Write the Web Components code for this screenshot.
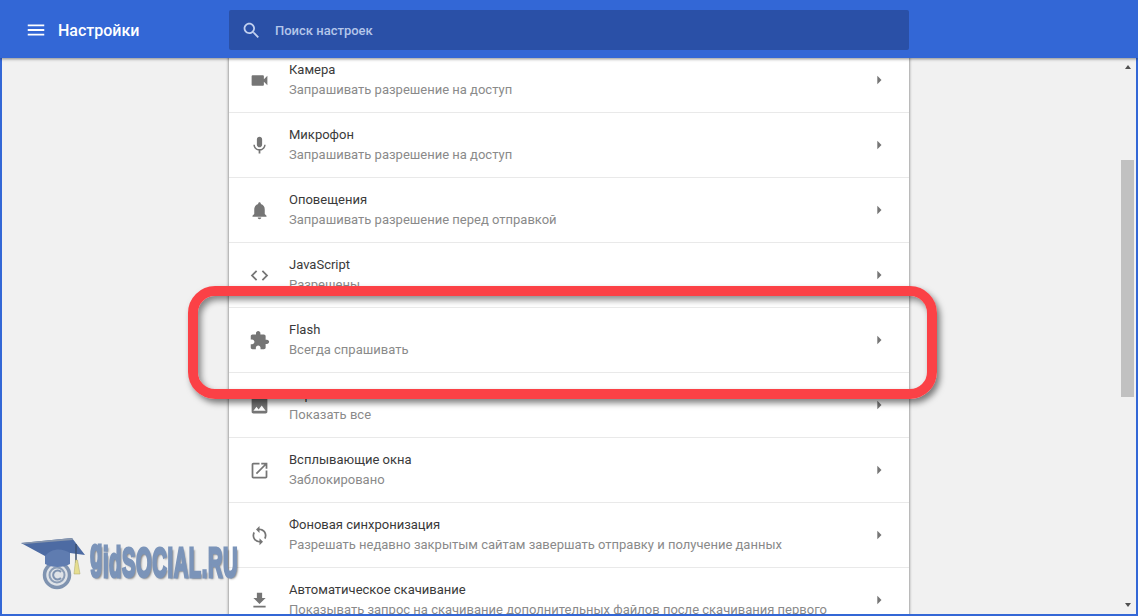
<!DOCTYPE html>
<html lang="ru">
<head>
<meta charset="utf-8">
<title>Настройки</title>
<style>
    html, body { margin: 0; height: 100%; overflow: hidden; }
    body { font-family: Roboto, "Liberation Sans", sans-serif; }
</style>
</head>
<body>
<settings-app>
    <settings-row icon="videocam">Камера<span slot="sub">Запрашивать разрешение на доступ</span></settings-row>
    <settings-row icon="mic">Микрофон<span slot="sub">Запрашивать разрешение на доступ</span></settings-row>
    <settings-row icon="bell">Оповещения<span slot="sub">Запрашивать разрешение перед отправкой</span></settings-row>
    <settings-row icon="code">JavaScript<span slot="sub">Разрешены</span></settings-row>
    <settings-row icon="extension">Flash<span slot="sub">Всегда спрашивать</span></settings-row>
    <settings-row icon="photo">Картинки<span slot="sub">Показать все</span></settings-row>
    <settings-row icon="open">Всплывающие окна<span slot="sub">Заблокировано</span></settings-row>
    <settings-row icon="sync">Фоновая синхронизация<span slot="sub">Разрешать недавно закрытым сайтам завершать отправку и получение данных</span></settings-row>
    <settings-row icon="download" last>Автоматическое скачивание<span slot="sub">Показывать запрос на скачивание дополнительных файлов после скачивания первого</span></settings-row>
</settings-app>

<script>
const ICONS = {
    menu: 'M3 18h18v-2H3v2zm0-5h18v-2H3v2zm0-7v2h18V6H3z',
    search: 'M15.5 14h-.79l-.28-.27C15.41 12.59 16 11.11 16 9.5 16 5.91 13.09 3 9.5 3S3 5.91 3 9.5 5.91 16 9.5 16c1.61 0 3.09-.59 4.23-1.57l.27.28v.79l5 4.99L20.49 19l-4.99-5zm-6 0C7.01 14 5 11.99 5 9.5S7.01 5 9.5 5 14 7.01 14 9.5 11.99 14 9.5 14z',
    videocam: 'M17 10.5V7c0-.55-.45-1-1-1H4c-.55 0-1 .45-1 1v10c0 .55.45 1 1 1h12c.55 0 1-.45 1-1v-3.5l4 4v-11l-4 4z',
    mic: 'M12 14c1.66 0 2.99-1.34 2.99-3L15 5c0-1.66-1.34-3-3-3S9 3.34 9 5v6c0 1.66 1.34 3 3 3zm5.3-3c0 3-2.54 5.1-5.3 5.1S6.7 14 6.7 11H5c0 3.41 2.72 6.23 6 6.72V21h2v-3.28c3.28-.48 6-3.3 6-6.72h-1.7z',
    bell: 'M12 22c1.1 0 2-.9 2-2h-4c0 1.1.9 2 2 2zm6-6v-5c0-3.07-1.63-5.64-4.5-6.32V4c0-.83-.67-1.5-1.5-1.5s-1.5.67-1.5 1.5v.68C7.64 5.36 6 7.92 6 11v5l-2 2v1h16v-1l-2-2z',
    code: 'M9.4 16.6L4.8 12l4.6-4.6L8 6l-6 6 6 6 1.4-1.4zm5.2 0l4.6-4.6-4.6-4.6L16 6l6 6-6 6-1.4-1.4z',
    extension: 'M20.5 11H19V7c0-1.1-.9-2-2-2h-4V3.5C13 2.12 11.88 1 10.5 1S8 2.12 8 3.5V5H4c-1.1 0-1.99.9-1.99 2v3.8H3.5c1.49 0 2.7 1.21 2.7 2.7s-1.21 2.7-2.7 2.7H2V20c0 1.1.9 2 2 2h3.8v-1.5c0-1.49 1.21-2.7 2.7-2.7 1.49 0 2.7 1.21 2.7 2.7V22H17c1.1 0 2-.9 2-2v-4h1.5c1.38 0 2.5-1.12 2.5-2.5S21.88 11 20.5 11z',
    photo: 'M21 19V5c0-1.1-.9-2-2-2H5c-1.1 0-2 .9-2 2v14c0 1.1.9 2 2 2h14c1.1 0 2-.9 2-2zM8.5 13.5l2.5 3.01L14.5 12l4.5 6H5l3.5-4.5z',
    open: 'M19 19H5V5h7V3H5c-1.11 0-2 .9-2 2v14c0 1.1.89 2 2 2h14c1.1 0 2-.9 2-2v-7h-2v7zM14 3v2h3.59l-9.83 9.83 1.41 1.41L19 6.41V10h2V3h-7z',
    sync: 'M12 4V1L8 5l4 4V6c3.31 0 6 2.69 6 6 0 1.01-.25 1.97-.7 2.8l1.46 1.46C19.54 15.03 20 13.57 20 12c0-4.42-3.58-8-8-8zm0 14c-3.31 0-6-2.69-6-6 0-1.01.25-1.97.7-2.8L5.24 7.74C4.46 8.97 4 10.43 4 12c0 4.42 3.58 8 8 8v3l4-4-4-4v3z',
    download: 'M19 9h-4V3H9v6H5l7 7 7-7zM5 18v2h14v-2H5z',
    arrow: 'M10 7l5 5-5 5z'
};

class SetIcon extends HTMLElement {
    connectedCallback() {
        const name = this.getAttribute('name');
        this.attachShadow({ mode: 'open' });
        this.shadowRoot.innerHTML = `
            <style>
                :host { display: block; width: var(--size, 24px); height: var(--size, 24px); flex: none; }
                svg { display: block; width: 100%; height: 100%; fill: currentColor; }
            </style>
            <svg viewBox="0 0 24 24"><path d="${ICONS[name]}"></path></svg>
        `;
    }
}
customElements.define('set-icon', SetIcon);

class SettingsRow extends HTMLElement {
    connectedCallback() {
        this.attachShadow({ mode: 'open' });
        this.shadowRoot.innerHTML = `
            <style>
                :host {
                    display: flex;
                    align-items: center;
                    height: 64px;
                    padding: 0 16px 0 18px;
                    border-bottom: 1px solid #e9e9e9;
                    color: #757575;
                    flex: none;
                }
                :host([last]) { border-bottom: 0; }
                .ico { --size: 21px; margin: 0 1.5px; }
                .text { flex: 1; margin-left: 18px; min-width: 0; }
                .label { font-size: 13px; line-height: 20px; color: #3a3a3a; }
                .sub { font-size: 13px; line-height: 20px; color: #8a8a8a; white-space: nowrap; }
                .go { --size: 20px; color: #757575; margin-right: 4px; }
            </style>
            <set-icon class="ico" name="${this.getAttribute('icon')}"></set-icon>
            <div class="text">
                <div class="label"><slot></slot></div>
                <div class="sub"><slot name="sub"></slot></div>
            </div>
            <set-icon class="go" name="arrow"></set-icon>
        `;
    }
}
customElements.define('settings-row', SettingsRow);

class SearchBox extends HTMLElement {
    connectedCallback() {
        this.attachShadow({ mode: 'open' });
        this.shadowRoot.innerHTML = `
            <style>
                :host {
                    display: flex;
                    align-items: center;
                    gap: 13.5px;
                    width: 680px;
                    height: 40px;
                    padding: 0 11.5px;
                    box-sizing: border-box;
                    border-radius: 2px;
                    background: #2a50a7;
                    font-size: 13px;
                    font-weight: 500;
                }
                set-icon { --size: 21px; color: #c2d1f0; }
                span { color: #b4c6ea; }
            </style>
            <set-icon name="search"></set-icon>
            <span>Поиск настроек</span>
        `;
    }
}
customElements.define('search-box', SearchBox);

class SettingsHeader extends HTMLElement {
    connectedCallback() {
        this.attachShadow({ mode: 'open' });
        this.shadowRoot.innerHTML = `
            <style>
                :host {
                    display: flex;
                    align-items: center;
                    height: 58px;
                    padding-top: 2px;
                    box-sizing: border-box;
                    flex: none;
                    background: #3367d6;
                    color: #fff;
                    box-shadow: 0 1px 3px rgba(0, 0, 0, .45);
                    position: relative;
                    z-index: 1;
                }
                .left { display: flex; align-items: center; width: 229px; padding-left: 25px; box-sizing: border-box; }
                set-icon { --size: 22px; }
                h1 { margin: 0 0 0 11px; font-size: 16px; font-weight: 500; }
            </style>
            <div class="left">
                <set-icon name="menu"></set-icon>
                <h1>Настройки</h1>
            </div>
            <search-box></search-box>
        `;
    }
}
customElements.define('settings-header', SettingsHeader);

class ScrollTrack extends HTMLElement {
    connectedCallback() {
        this.attachShadow({ mode: 'open' });
        this.shadowRoot.innerHTML = `
            <style>
                :host { display: flex; flex-direction: column; width: 13px; flex: none; margin-right: 2px; }
                .up, .down { width: 0; height: 0; margin: 0 auto; border: 3.5px solid transparent; }
                .up { margin-top: 7px; border-top: 0; border-bottom: 4px solid #505050; }
                .thumb { height: 237px; margin-top: 91px; background: #c1c1c1; }
                .down { margin-top: auto; margin-bottom: 7px; border-bottom: 0; border-top: 4px solid #505050; }
            </style>
            <div class="up"></div>
            <div class="thumb"></div>
            <div class="down"></div>
        `;
    }
}
customElements.define('scroll-track', ScrollTrack);

class SiteMark extends HTMLElement {
    connectedCallback() {
        this.attachShadow({ mode: 'open' });
        this.shadowRoot.innerHTML = `
            <style>
                :host {
                    position: absolute;
                    left: 20px;
                    top: 535px;
                    width: 225px;
                    height: 60px;
                    pointer-events: none;
                }
                svg { position: absolute; left: 0; top: 0; filter: blur(.4px); }
                .word {
                    position: absolute;
                    left: 70px;
                    top: 2px;
                    font: bold 43px/50px "Liberation Sans", sans-serif;
                    letter-spacing: 1.2px;
                    color: #7b94b9;
                    -webkit-text-stroke: 3px #7b94b9;
                    text-shadow: 3px 2px 3px rgba(40, 40, 40, .55);
                    transform: scaleX(.47);
                    transform-origin: 0 0;
                    white-space: nowrap;
                    filter: blur(.5px);
                }
                .g { display: inline-block; transform: translateY(-9px); }
                .caps { text-transform: uppercase; }
            </style>
            <svg width="70" height="60" viewBox="20 535 70 60">
                <circle cx="57" cy="575" r="12.5" fill="#dfe3e8" stroke="#7f93b0" stroke-width="3.5"></circle>
                <circle cx="57" cy="575" r="7.5" fill="none" stroke="#8b9db6" stroke-width="2"></circle>
                <path d="M61 572a4.5 4.5 0 1 0 0 6" fill="none" stroke="#7f93b0" stroke-width="2"></path>
                <path d="M45 548h25v16c-7 4-18 4-25 0z" fill="#5f7cb0"></path>
                <path d="M21 543L72 538L85 555L70 553C62 548 52 548 45 556z" fill="#4d6ba3"></path>
                <path d="M21 543L72 538L73 540L24 544z" fill="#8796ad"></path>
                <path d="M76 544v19" stroke="#3d4f6e" stroke-width="1.5" fill="none"></path>
                <path d="M75.5 560h2l2.500 14h-6z" fill="#e6de90" stroke="#a9a468" stroke-width=".5"></path>
            </svg>
            <span class="word"><span class="g">g</span>id<span class="caps">social.ru</span></span>
        `;
    }
}
customElements.define('site-mark', SiteMark);

class RedFrame extends HTMLElement {
    connectedCallback() {
        this.attachShadow({ mode: 'open' });
        this.shadowRoot.innerHTML = `
            <style>
                :host {
                    position: absolute;
                    left: 188px;
                    top: 286px;
                    width: 749px;
                    height: 113px;
                    box-sizing: border-box;
                    border: 10px solid #fb4146;
                    border-radius: 27px;
                    box-shadow: 3px 4px 6px rgba(0, 0, 0, .5), inset 3px 4px 6px rgba(0, 0, 0, .45);
                    pointer-events: none;
                }
            </style>
        `;
    }
}
customElements.define('red-frame', RedFrame);

class SettingsApp extends HTMLElement {
    connectedCallback() {
        this.attachShadow({ mode: 'open' });
        this.shadowRoot.innerHTML = `
            <style>
                :host {
                    display: flex;
                    flex-direction: column;
                    position: relative;
                    width: 1138px;
                    height: 616px;
                    box-sizing: border-box;
                    overflow: hidden;
                    background: #f1f1f1;
                    font-family: Roboto, "Liberation Sans", sans-serif;
                }
                .page {
                    flex: 1;
                    display: flex;
                    min-height: 0;
                    overflow: hidden;
                    border: solid #3367d6;
                    border-width: 0 2px 2px 2px;
                }
                .scroll { flex: 1; min-width: 0; overflow: hidden; padding-left: 227px; }
                .card {
                    width: 680px;
                    margin-top: -10px;
                    background: #fff;
                    box-shadow: 0 0 3px rgba(0, 0, 0, .6);
                    display: flex;
                    flex-direction: column;
                }
            </style>
            <settings-header></settings-header>
            <div class="page">
                <div class="scroll">
                    <div class="card"><slot></slot></div>
                </div>
                <scroll-track></scroll-track>
            </div>
            <red-frame></red-frame>
            <site-mark></site-mark>
        `;
    }
}
customElements.define('settings-app', SettingsApp);
</script>
</body>
</html>
